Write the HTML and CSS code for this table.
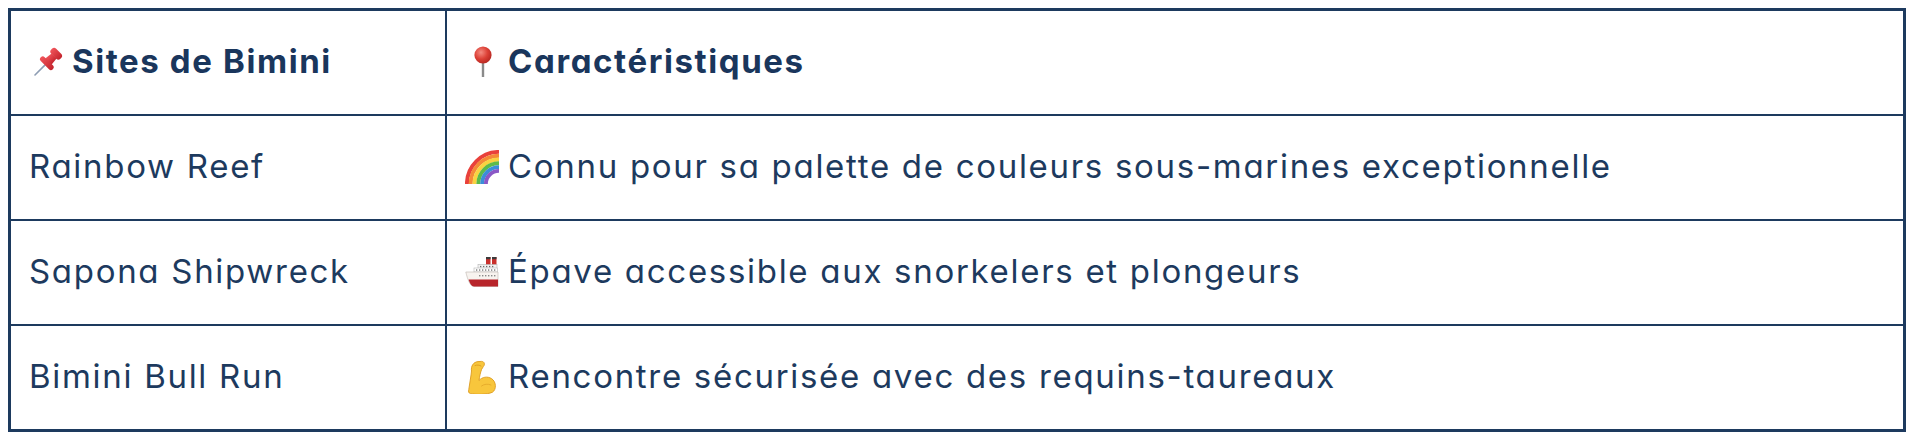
FILE: index.html
```html
<!DOCTYPE html>
<html lang="fr">
<head>
<meta charset="utf-8">
<title>Sites de Bimini</title>
<link rel="stylesheet" href="styles.css">
</head>
<body>
<div class="frame">
  <table class="sites">
    <colgroup>
      <col class="col-site">
      <col class="col-desc">
    </colgroup>
    <thead>
      <tr>
        <th>
          <div class="label">
            <svg class="emoji" viewBox="0 0 34 34" aria-hidden="true">
              <defs>
                <linearGradient id="pinRed" x1="0" y1="0" x2="1" y2="0">
                  <stop offset="0" stop-color="#f0545a"/>
                  <stop offset="1" stop-color="#c3232c"/>
                </linearGradient>
              </defs>
              <g transform="translate(1 1) rotate(45 17 17)">
                <line x1="17" y1="20" x2="17" y2="34" stroke="#8d9db3" stroke-width="1.6" stroke-linecap="round"/>
                <rect x="10.5" y="0.5" width="13" height="7" rx="3" fill="url(#pinRed)"/>
                <path d="M13.5 7 L20.5 7 L21.5 15.5 L12.5 15.5 Z" fill="url(#pinRed)"/>
                <rect x="8.5" y="14.5" width="17" height="5.5" rx="2.7" fill="url(#pinRed)"/>
              </g>
            </svg>
            <span>Sites de Bimini</span>
          </div>
        </th>
        <th>
          <div class="label">
            <svg class="emoji" viewBox="0 0 34 34" aria-hidden="true">
              <defs>
                <radialGradient id="ballRed" cx="0.38" cy="0.35" r="0.7">
                  <stop offset="0" stop-color="#f48a80"/>
                  <stop offset="0.55" stop-color="#dc4036"/>
                  <stop offset="1" stop-color="#b32520"/>
                </radialGradient>
              </defs>
              <rect x="16.8" y="17" width="2.4" height="15" fill="#8a8a8a"/>
              <circle cx="18" cy="10" r="8.6" fill="url(#ballRed)"/>
            </svg>
            <span>Caractéristiques</span>
          </div>
        </th>
      </tr>
    </thead>
    <tbody>
      <tr>
        <td><div class="plain">Rainbow Reef</div></td>
        <td>
          <div class="label">
            <svg class="emoji" viewBox="0 0 34 34" aria-hidden="true">
              <g fill="none" stroke-width="3.9">
                <path d="M1.9 34 A32.1 32.1 0 0 1 34 1.9" stroke="#e9413b"/>
                <path d="M5.7 34 A28.3 28.3 0 0 1 34 5.7" stroke="#f58a37"/>
                <path d="M9.5 34 A24.5 24.5 0 0 1 34 9.5" stroke="#f9d341"/>
                <path d="M13.3 34 A20.7 20.7 0 0 1 34 13.3" stroke="#5dbb4a"/>
                <path d="M17.1 34 A16.9 16.9 0 0 1 34 17.1" stroke="#3a8ed8"/>
                <path d="M20.9 34 A13.1 13.1 0 0 1 34 20.9" stroke="#8a58c6"/>
              </g>
            </svg>
            <span>Connu pour sa palette de couleurs sous-marines exceptionnelle</span>
          </div>
        </td>
      </tr>
      <tr>
        <td><div class="plain">Sapona Shipwreck</div></td>
        <td>
          <div class="label">
            <svg class="emoji" viewBox="0 0 34 34" aria-hidden="true">
              <rect x="21" y="2" width="4.5" height="9" fill="#c9302c"/>
              <rect x="21" y="2" width="4.5" height="2.2" fill="#3b3b3b"/>
              <rect x="27" y="2" width="4.5" height="9" fill="#c9302c"/>
              <rect x="27" y="2" width="4.5" height="2.2" fill="#3b3b3b"/>
              <rect x="13" y="9.5" width="19" height="4" fill="#f2f2f2" stroke="#b5b5b5" stroke-width="0.6"/>
              <rect x="9" y="13" width="23.5" height="4" fill="#ffffff" stroke="#b5b5b5" stroke-width="0.6"/>
              <g fill="#6b6b6b">
                <rect x="11" y="14.4" width="1.3" height="1.3"/>
                <rect x="14" y="14.4" width="1.3" height="1.3"/>
                <rect x="17" y="14.4" width="1.3" height="1.3"/>
                <rect x="20" y="14.4" width="1.3" height="1.3"/>
                <rect x="23" y="14.4" width="1.3" height="1.3"/>
                <rect x="26" y="14.4" width="1.3" height="1.3"/>
                <rect x="29" y="14.4" width="1.3" height="1.3"/>
                <rect x="15" y="10.9" width="1.3" height="1.3"/>
                <rect x="18" y="10.9" width="1.3" height="1.3"/>
                <rect x="21" y="10.9" width="1.3" height="1.3"/>
                <rect x="24" y="10.9" width="1.3" height="1.3"/>
                <rect x="27" y="10.9" width="1.3" height="1.3"/>
              </g>
              <path d="M0.8 17 L33 17 L33 31.5 L9 31.5 C5 31.5 2.5 24 0.8 17 Z" fill="#f7f3ef" stroke="#bdb6ae" stroke-width="0.6"/>
              <path d="M3.6 24.5 L33 24.5 L33 31.5 L9 31.5 C6.5 31.5 4.8 28.5 3.6 24.5 Z" fill="#b8252b"/>
              <g fill="#8a8a8a">
                <rect x="14" y="20" width="1.4" height="1.4"/>
                <rect x="17" y="20" width="1.4" height="1.4"/>
                <rect x="20" y="20" width="1.4" height="1.4"/>
                <rect x="23" y="20" width="1.4" height="1.4"/>
                <rect x="26" y="20" width="1.4" height="1.4"/>
                <rect x="29" y="20" width="1.4" height="1.4"/>
              </g>
            </svg>
            <span>Épave accessible aux snorkelers et plongeurs</span>
          </div>
        </td>
      </tr>
      <tr>
        <td><div class="plain">Bimini Bull Run</div></td>
        <td>
          <div class="label">
            <svg class="emoji" viewBox="0 0 34 34" aria-hidden="true">
              <path d="M6.5 11 C5.8 6 8.5 2 13 1.6 L16.5 1.4 C19.5 1.3 20.3 4.6 18.3 6.6 L16.6 9.4 C15.4 12.5 14.6 16.5 14 20.5 C17 17 22.5 16 26.5 18.6 C31.5 21.8 31.5 29.6 27.5 32.2 C22.5 34.6 10.5 34.6 5.5 33.6 C3.6 33.2 3.2 31.4 3.8 29.4 L6.2 14 Z" fill="#f8c63c" stroke="#dc9b1f" stroke-width="0.9"/>
              <path d="M10 5.5 C12 4.8 14.5 5 16 6" fill="none" stroke="#dc9b1f" stroke-width="0.9" stroke-linecap="round"/>
              <path d="M16.5 26 C19 24 23 23.6 26 25" fill="none" stroke="#e4a92a" stroke-width="0.9" stroke-linecap="round"/>
            </svg>
            <span>Rencontre sécurisée avec des requins-taureaux</span>
          </div>
        </td>
      </tr>
    </tbody>
  </table>
</div>
</body>
</html>
```

FILE: styles.css
```css
html, body {
  background: #ffffff;
}

body {
  margin: 8px;
  font-family: Inter, "Liberation Sans", sans-serif;
  font-feature-settings: "cv11" 1;
  color: #1d3a5e;
}

.frame {
  width: 1898px;
  box-sizing: border-box;
  border: 3px solid #1d3a5e;
}

.sites {
  width: 100%;
  border-collapse: collapse;
  table-layout: fixed;
}

.col-site {
  width: 435px;
}

.sites th,
.sites td {
  border: 2px solid #1d3a5e;
  padding: 30px 16px 32px 18px;
  text-align: left;
  vertical-align: middle;
  font-size: 33px;
  line-height: 41px;
  white-space: nowrap;
}

.sites td {
  font-weight: 400;
  letter-spacing: 1.7px;
}

.sites th {
  font-weight: 700;
  letter-spacing: 1.6px;
  color: #1a365c;
}

.sites thead tr:first-child th {
  border-top: 0;
}

.sites tr > :first-child {
  border-left: 0;
}

.sites tr > :last-child {
  border-right: 0;
}

.sites tbody tr:last-child td {
  border-bottom: 0;
}

.plain {
  height: 41px;
}

.label {
  display: flex;
  align-items: center;
  gap: 9px;
  height: 41px;
}

.emoji {
  width: 34px;
  height: 34px;
  flex: none;
  display: block;
}
```
